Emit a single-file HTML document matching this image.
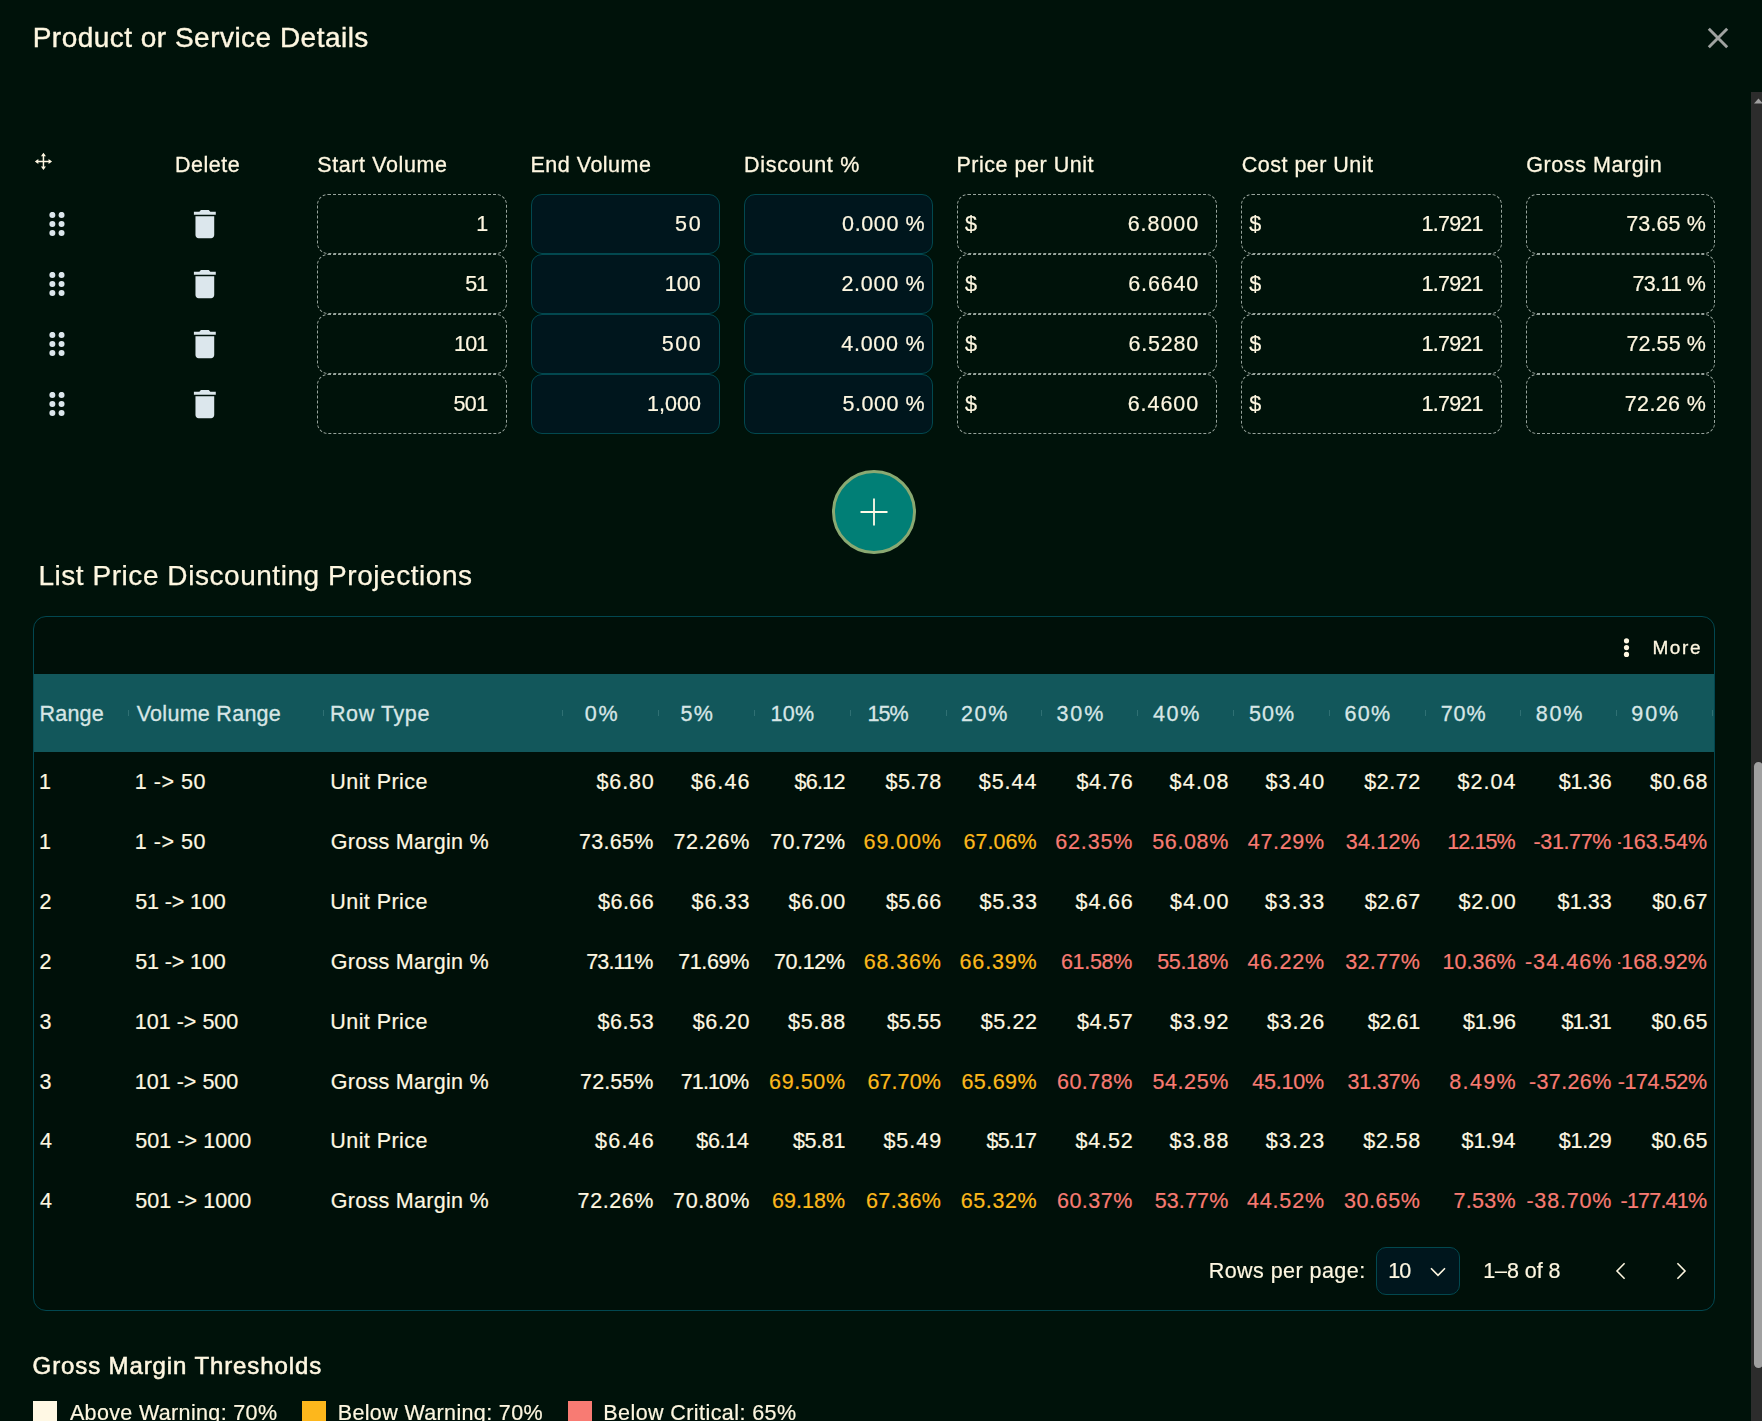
<!DOCTYPE html>
<html lang="en"><head><meta charset="utf-8"><title>Product or Service Details</title>
<style>
*{box-sizing:border-box;margin:0;padding:0}
html,body{width:1762px;height:1421px;overflow:hidden;background:#00120a}
body{position:relative;font-family:"Liberation Sans",Arial,sans-serif;color:#fef7e1;font-size:21.5px}
#root{position:absolute;left:0;top:0;width:1762px;height:1421px;overflow:hidden;will-change:transform}
.a{position:absolute;white-space:nowrap;line-height:30px}

.box{position:absolute;height:60px;border-radius:11px}
.ro{border:1px dashed #97a39c}
.ed{border:1px solid #02484f;background:#00161d}
.tbl{position:absolute;left:33px;top:616px;width:1682px;height:695px;border:1px solid #024750;border-radius:13px;background:#001009}
.thead{position:absolute;left:34px;top:674px;width:1680px;height:78px;background:#12575b}
.sep{position:absolute;top:710px;width:1px;height:6px;background:#2f7073}
</style></head>
<body>
<div class="tbl"></div><div class="thead"></div>
<div class="sep" style="left:128.0px"></div>
<div class="sep" style="left:322.5px"></div>
<div class="sep" style="left:562.4px"></div>
<div class="sep" style="left:658.2px"></div>
<div class="sep" style="left:754.0px"></div>
<div class="sep" style="left:849.8px"></div>
<div class="sep" style="left:945.6px"></div>
<div class="sep" style="left:1041.4px"></div>
<div class="sep" style="left:1137.2px"></div>
<div class="sep" style="left:1233.0px"></div>
<div class="sep" style="left:1328.8px"></div>
<div class="sep" style="left:1424.6px"></div>
<div class="sep" style="left:1520.4px"></div>
<div class="sep" style="left:1616.2px"></div>
<div class="sep" style="left:1712.0px"></div>
<div class="a" style="left:39.4px;top:699.0px;letter-spacing:0.26px;color:#d7e6e6;-webkit-text-stroke:0.3px #d7e6e6;">Range</div>
<div class="a" style="left:136.7px;top:699.0px;letter-spacing:0.28px;color:#d7e6e6;-webkit-text-stroke:0.3px #d7e6e6;">Volume Range</div>
<div class="a" style="left:330.0px;top:699.0px;letter-spacing:0.59px;color:#d7e6e6;-webkit-text-stroke:0.3px #d7e6e6;">Row Type</div>
<div class="a" style="left:584.7px;top:699.0px;letter-spacing:1.83px;color:#d7e6e6;-webkit-text-stroke:0.3px #d7e6e6;">0%</div>
<div class="a" style="left:680.4px;top:699.0px;letter-spacing:1.44px;color:#d7e6e6;-webkit-text-stroke:0.3px #d7e6e6;">5%</div>
<div class="a" style="left:770.5px;top:699.0px;letter-spacing:0.31px;color:#d7e6e6;-webkit-text-stroke:0.3px #d7e6e6;">10%</div>
<div class="a" style="left:867.5px;top:699.0px;letter-spacing:-0.90px;color:#d7e6e6;-webkit-text-stroke:0.3px #d7e6e6;">15%</div>
<div class="a" style="left:960.9px;top:699.0px;letter-spacing:1.67px;color:#d7e6e6;-webkit-text-stroke:0.3px #d7e6e6;">20%</div>
<div class="a" style="left:1056.4px;top:699.0px;letter-spacing:1.95px;color:#d7e6e6;-webkit-text-stroke:0.3px #d7e6e6;">30%</div>
<div class="a" style="left:1152.9px;top:699.0px;letter-spacing:1.72px;color:#d7e6e6;-webkit-text-stroke:0.3px #d7e6e6;">40%</div>
<div class="a" style="left:1248.9px;top:699.0px;letter-spacing:1.10px;color:#d7e6e6;-webkit-text-stroke:0.3px #d7e6e6;">50%</div>
<div class="a" style="left:1344.4px;top:699.0px;letter-spacing:1.36px;color:#d7e6e6;-webkit-text-stroke:0.3px #d7e6e6;">60%</div>
<div class="a" style="left:1440.7px;top:699.0px;letter-spacing:0.90px;color:#d7e6e6;-webkit-text-stroke:0.3px #d7e6e6;">70%</div>
<div class="a" style="left:1535.7px;top:699.0px;letter-spacing:1.80px;color:#d7e6e6;-webkit-text-stroke:0.3px #d7e6e6;">80%</div>
<div class="a" style="left:1631.3px;top:699.0px;letter-spacing:1.91px;color:#d7e6e6;-webkit-text-stroke:0.3px #d7e6e6;">90%</div>
<div class="a" style="left:39.0px;top:767.1px;letter-spacing:1.35px;-webkit-text-stroke:0.2px #fef7e1;">1</div>
<div class="a" style="left:134.8px;top:767.1px;letter-spacing:0.51px;-webkit-text-stroke:0.2px #fef7e1;">1 -&gt; 50</div>
<div class="a" style="left:330.3px;top:767.1px;letter-spacing:0.43px;-webkit-text-stroke:0.2px #fef7e1;">Unit Price</div>
<div class="a" style="left:596.6px;top:767.1px;letter-spacing:0.81px;-webkit-text-stroke:0.2px #fef7e1;">$6.80</div>
<div class="a" style="left:690.9px;top:767.1px;letter-spacing:1.21px;-webkit-text-stroke:0.2px #fef7e1;">$6.46</div>
<div class="a" style="left:794.5px;top:767.1px;letter-spacing:-0.72px;-webkit-text-stroke:0.2px #fef7e1;">$6.12</div>
<div class="a" style="left:885.6px;top:767.1px;letter-spacing:0.43px;-webkit-text-stroke:0.2px #fef7e1;">$5.78</div>
<div class="a" style="left:978.7px;top:767.1px;letter-spacing:1.00px;-webkit-text-stroke:0.2px #fef7e1;">$5.44</div>
<div class="a" style="left:1076.5px;top:767.1px;letter-spacing:0.61px;-webkit-text-stroke:0.2px #fef7e1;">$4.76</div>
<div class="a" style="left:1169.6px;top:767.1px;letter-spacing:1.27px;-webkit-text-stroke:0.2px #fef7e1;">$4.08</div>
<div class="a" style="left:1265.4px;top:767.1px;letter-spacing:1.26px;-webkit-text-stroke:0.2px #fef7e1;">$3.40</div>
<div class="a" style="left:1364.3px;top:767.1px;letter-spacing:0.52px;-webkit-text-stroke:0.2px #fef7e1;">$2.72</div>
<div class="a" style="left:1457.6px;top:767.1px;letter-spacing:1.01px;-webkit-text-stroke:0.2px #fef7e1;">$2.04</div>
<div class="a" style="left:1558.8px;top:767.1px;letter-spacing:-0.21px;-webkit-text-stroke:0.2px #fef7e1;">$1.36</div>
<div class="a" style="left:1650.1px;top:767.1px;letter-spacing:0.90px;-webkit-text-stroke:0.2px #fef7e1;">$0.68</div>
<div class="a" style="left:39.0px;top:827.0px;letter-spacing:1.35px;-webkit-text-stroke:0.2px #fef7e1;">1</div>
<div class="a" style="left:134.8px;top:827.0px;letter-spacing:0.51px;-webkit-text-stroke:0.2px #fef7e1;">1 -&gt; 50</div>
<div class="a" style="left:330.7px;top:827.0px;letter-spacing:0.29px;-webkit-text-stroke:0.2px #fef7e1;">Gross Margin %</div>
<div class="a" style="left:579.0px;top:827.0px;letter-spacing:0.31px;-webkit-text-stroke:0.2px #fef7e1;">73.65%</div>
<div class="a" style="left:673.4px;top:827.0px;letter-spacing:0.59px;-webkit-text-stroke:0.2px #fef7e1;">72.26%</div>
<div class="a" style="left:770.2px;top:827.0px;letter-spacing:0.39px;-webkit-text-stroke:0.2px #fef7e1;">70.72%</div>
<div class="a" style="left:863.6px;top:827.0px;letter-spacing:0.87px;color:#fcb81c;-webkit-text-stroke:0.2px #fcb81c;">69.00%</div>
<div class="a" style="left:963.5px;top:827.0px;letter-spacing:0.05px;color:#fcb81c;-webkit-text-stroke:0.2px #fcb81c;">67.06%</div>
<div class="a" style="left:1055.2px;top:827.0px;letter-spacing:0.87px;color:#f87b73;-webkit-text-stroke:0.2px #f87b73;">62.35%</div>
<div class="a" style="left:1152.3px;top:827.0px;letter-spacing:0.61px;color:#f87b73;-webkit-text-stroke:0.2px #f87b73;">56.08%</div>
<div class="a" style="left:1247.8px;top:827.0px;letter-spacing:0.66px;color:#f87b73;-webkit-text-stroke:0.2px #f87b73;">47.29%</div>
<div class="a" style="left:1345.7px;top:827.0px;letter-spacing:0.24px;color:#f87b73;-webkit-text-stroke:0.2px #f87b73;">34.12%</div>
<div class="a" style="left:1447.2px;top:827.0px;letter-spacing:-0.90px;color:#f87b73;-webkit-text-stroke:0.2px #f87b73;">12.15%</div>
<div class="a" style="left:1533.6px;top:827.0px;letter-spacing:-0.39px;color:#f87b73;-webkit-text-stroke:0.2px #f87b73;">-31.77%</div>
<div class="a" style="left:1614.4px;top:827.0px;letter-spacing:0.09px;color:#f87b73;-webkit-text-stroke:0.2px #f87b73;clip-path:inset(0 0 0 3.8px);">-163.54%</div>
<div class="a" style="left:39.4px;top:886.8px;letter-spacing:1.35px;-webkit-text-stroke:0.2px #fef7e1;">2</div>
<div class="a" style="left:135.2px;top:886.8px;letter-spacing:-0.12px;-webkit-text-stroke:0.2px #fef7e1;">51 -&gt; 100</div>
<div class="a" style="left:330.3px;top:886.8px;letter-spacing:0.43px;-webkit-text-stroke:0.2px #fef7e1;">Unit Price</div>
<div class="a" style="left:598.1px;top:886.8px;letter-spacing:0.45px;-webkit-text-stroke:0.2px #fef7e1;">$6.66</div>
<div class="a" style="left:691.5px;top:886.8px;letter-spacing:1.04px;-webkit-text-stroke:0.2px #fef7e1;">$6.33</div>
<div class="a" style="left:788.5px;top:886.8px;letter-spacing:0.74px;-webkit-text-stroke:0.2px #fef7e1;">$6.00</div>
<div class="a" style="left:886.0px;top:886.8px;letter-spacing:0.32px;-webkit-text-stroke:0.2px #fef7e1;">$5.66</div>
<div class="a" style="left:979.4px;top:886.8px;letter-spacing:0.91px;-webkit-text-stroke:0.2px #fef7e1;">$5.33</div>
<div class="a" style="left:1075.6px;top:886.8px;letter-spacing:0.83px;-webkit-text-stroke:0.2px #fef7e1;">$4.66</div>
<div class="a" style="left:1170.1px;top:886.8px;letter-spacing:1.11px;-webkit-text-stroke:0.2px #fef7e1;">$4.00</div>
<div class="a" style="left:1265.1px;top:886.8px;letter-spacing:1.34px;-webkit-text-stroke:0.2px #fef7e1;">$3.33</div>
<div class="a" style="left:1364.8px;top:886.8px;letter-spacing:0.38px;-webkit-text-stroke:0.2px #fef7e1;">$2.67</div>
<div class="a" style="left:1458.5px;top:886.8px;letter-spacing:0.88px;-webkit-text-stroke:0.2px #fef7e1;">$2.00</div>
<div class="a" style="left:1557.6px;top:886.8px;letter-spacing:0.08px;-webkit-text-stroke:0.2px #fef7e1;">$1.33</div>
<div class="a" style="left:1652.2px;top:886.8px;letter-spacing:0.39px;-webkit-text-stroke:0.2px #fef7e1;">$0.67</div>
<div class="a" style="left:39.4px;top:946.7px;letter-spacing:1.35px;-webkit-text-stroke:0.2px #fef7e1;">2</div>
<div class="a" style="left:135.2px;top:946.7px;letter-spacing:-0.12px;-webkit-text-stroke:0.2px #fef7e1;">51 -&gt; 100</div>
<div class="a" style="left:330.7px;top:946.7px;letter-spacing:0.29px;-webkit-text-stroke:0.2px #fef7e1;">Gross Margin %</div>
<div class="a" style="left:586.2px;top:946.7px;letter-spacing:-0.83px;-webkit-text-stroke:0.2px #fef7e1;">73.11%</div>
<div class="a" style="left:678.2px;top:946.7px;letter-spacing:-0.37px;-webkit-text-stroke:0.2px #fef7e1;">71.69%</div>
<div class="a" style="left:773.9px;top:946.7px;letter-spacing:-0.36px;-webkit-text-stroke:0.2px #fef7e1;">70.12%</div>
<div class="a" style="left:863.8px;top:946.7px;letter-spacing:0.83px;color:#fcb81c;-webkit-text-stroke:0.2px #fcb81c;">68.36%</div>
<div class="a" style="left:959.6px;top:946.7px;letter-spacing:0.82px;color:#fcb81c;-webkit-text-stroke:0.2px #fcb81c;">66.39%</div>
<div class="a" style="left:1060.9px;top:946.7px;letter-spacing:-0.28px;color:#f87b73;-webkit-text-stroke:0.2px #f87b73;">61.58%</div>
<div class="a" style="left:1157.3px;top:946.7px;letter-spacing:-0.39px;color:#f87b73;-webkit-text-stroke:0.2px #f87b73;">55.18%</div>
<div class="a" style="left:1247.4px;top:946.7px;letter-spacing:0.74px;color:#f87b73;-webkit-text-stroke:0.2px #f87b73;">46.22%</div>
<div class="a" style="left:1345.2px;top:946.7px;letter-spacing:0.34px;color:#f87b73;-webkit-text-stroke:0.2px #f87b73;">32.77%</div>
<div class="a" style="left:1442.6px;top:946.7px;letter-spacing:0.02px;color:#f87b73;-webkit-text-stroke:0.2px #f87b73;">10.36%</div>
<div class="a" style="left:1524.9px;top:946.7px;letter-spacing:1.06px;color:#f87b73;-webkit-text-stroke:0.2px #f87b73;">-34.46%</div>
<div class="a" style="left:1613.7px;top:946.7px;letter-spacing:0.18px;color:#f87b73;-webkit-text-stroke:0.2px #f87b73;clip-path:inset(0 0 0 4.5px);">-168.92%</div>
<div class="a" style="left:39.4px;top:1006.6px;letter-spacing:1.35px;-webkit-text-stroke:0.2px #fef7e1;">3</div>
<div class="a" style="left:134.8px;top:1006.6px;letter-spacing:0.01px;-webkit-text-stroke:0.2px #fef7e1;">101 -&gt; 500</div>
<div class="a" style="left:330.3px;top:1006.6px;letter-spacing:0.43px;-webkit-text-stroke:0.2px #fef7e1;">Unit Price</div>
<div class="a" style="left:597.4px;top:1006.6px;letter-spacing:0.62px;-webkit-text-stroke:0.2px #fef7e1;">$6.53</div>
<div class="a" style="left:692.7px;top:1006.6px;letter-spacing:0.72px;-webkit-text-stroke:0.2px #fef7e1;">$6.20</div>
<div class="a" style="left:787.9px;top:1006.6px;letter-spacing:0.90px;-webkit-text-stroke:0.2px #fef7e1;">$5.88</div>
<div class="a" style="left:887.1px;top:1006.6px;letter-spacing:0.05px;-webkit-text-stroke:0.2px #fef7e1;">$5.55</div>
<div class="a" style="left:980.7px;top:1006.6px;letter-spacing:0.62px;-webkit-text-stroke:0.2px #fef7e1;">$5.22</div>
<div class="a" style="left:1077.0px;top:1006.6px;letter-spacing:0.49px;-webkit-text-stroke:0.2px #fef7e1;">$4.57</div>
<div class="a" style="left:1170.0px;top:1006.6px;letter-spacing:1.18px;-webkit-text-stroke:0.2px #fef7e1;">$3.92</div>
<div class="a" style="left:1266.9px;top:1006.6px;letter-spacing:0.89px;-webkit-text-stroke:0.2px #fef7e1;">$3.26</div>
<div class="a" style="left:1367.8px;top:1006.6px;letter-spacing:-0.36px;-webkit-text-stroke:0.2px #fef7e1;">$2.61</div>
<div class="a" style="left:1463.0px;top:1006.6px;letter-spacing:-0.23px;-webkit-text-stroke:0.2px #fef7e1;">$1.96</div>
<div class="a" style="left:1561.5px;top:1006.6px;letter-spacing:-0.90px;-webkit-text-stroke:0.2px #fef7e1;">$1.31</div>
<div class="a" style="left:1651.5px;top:1006.6px;letter-spacing:0.56px;-webkit-text-stroke:0.2px #fef7e1;">$0.65</div>
<div class="a" style="left:39.4px;top:1066.5px;letter-spacing:1.35px;-webkit-text-stroke:0.2px #fef7e1;">3</div>
<div class="a" style="left:134.8px;top:1066.5px;letter-spacing:0.01px;-webkit-text-stroke:0.2px #fef7e1;">101 -&gt; 500</div>
<div class="a" style="left:330.7px;top:1066.5px;letter-spacing:0.29px;-webkit-text-stroke:0.2px #fef7e1;">Gross Margin %</div>
<div class="a" style="left:580.1px;top:1066.5px;letter-spacing:0.08px;-webkit-text-stroke:0.2px #fef7e1;">72.55%</div>
<div class="a" style="left:680.8px;top:1066.5px;letter-spacing:-0.90px;-webkit-text-stroke:0.2px #fef7e1;">71.10%</div>
<div class="a" style="left:769.1px;top:1066.5px;letter-spacing:0.60px;color:#fcb81c;-webkit-text-stroke:0.2px #fcb81c;">69.50%</div>
<div class="a" style="left:867.4px;top:1066.5px;letter-spacing:0.11px;color:#fcb81c;-webkit-text-stroke:0.2px #fcb81c;">67.70%</div>
<div class="a" style="left:961.4px;top:1066.5px;letter-spacing:0.47px;color:#fcb81c;-webkit-text-stroke:0.2px #fcb81c;">65.69%</div>
<div class="a" style="left:1056.9px;top:1066.5px;letter-spacing:0.53px;color:#f87b73;-webkit-text-stroke:0.2px #f87b73;">60.78%</div>
<div class="a" style="left:1152.5px;top:1066.5px;letter-spacing:0.57px;color:#f87b73;-webkit-text-stroke:0.2px #f87b73;">54.25%</div>
<div class="a" style="left:1252.3px;top:1066.5px;letter-spacing:-0.24px;color:#f87b73;-webkit-text-stroke:0.2px #f87b73;">45.10%</div>
<div class="a" style="left:1347.5px;top:1066.5px;letter-spacing:-0.12px;color:#f87b73;-webkit-text-stroke:0.2px #f87b73;">31.37%</div>
<div class="a" style="left:1449.3px;top:1066.5px;letter-spacing:1.35px;color:#f87b73;-webkit-text-stroke:0.2px #f87b73;">8.49%</div>
<div class="a" style="left:1528.9px;top:1066.5px;letter-spacing:0.39px;color:#f87b73;-webkit-text-stroke:0.2px #f87b73;">-37.26%</div>
<div class="a" style="left:1617.7px;top:1066.5px;letter-spacing:-0.38px;color:#f87b73;-webkit-text-stroke:0.2px #f87b73;">-174.52%</div>
<div class="a" style="left:40.1px;top:1126.3px;letter-spacing:1.35px;-webkit-text-stroke:0.2px #fef7e1;">4</div>
<div class="a" style="left:135.2px;top:1126.3px;letter-spacing:0.06px;-webkit-text-stroke:0.2px #fef7e1;">501 -&gt; 1000</div>
<div class="a" style="left:330.3px;top:1126.3px;letter-spacing:0.43px;-webkit-text-stroke:0.2px #fef7e1;">Unit Price</div>
<div class="a" style="left:595.1px;top:1126.3px;letter-spacing:1.21px;-webkit-text-stroke:0.2px #fef7e1;">$6.46</div>
<div class="a" style="left:696.2px;top:1126.3px;letter-spacing:-0.24px;-webkit-text-stroke:0.2px #fef7e1;">$6.14</div>
<div class="a" style="left:792.9px;top:1126.3px;letter-spacing:-0.34px;-webkit-text-stroke:0.2px #fef7e1;">$5.81</div>
<div class="a" style="left:883.4px;top:1126.3px;letter-spacing:0.99px;-webkit-text-stroke:0.2px #fef7e1;">$5.49</div>
<div class="a" style="left:986.6px;top:1126.3px;letter-spacing:-0.86px;-webkit-text-stroke:0.2px #fef7e1;">$5.17</div>
<div class="a" style="left:1075.5px;top:1126.3px;letter-spacing:0.86px;-webkit-text-stroke:0.2px #fef7e1;">$4.52</div>
<div class="a" style="left:1169.4px;top:1126.3px;letter-spacing:1.33px;-webkit-text-stroke:0.2px #fef7e1;">$3.88</div>
<div class="a" style="left:1265.8px;top:1126.3px;letter-spacing:1.18px;-webkit-text-stroke:0.2px #fef7e1;">$3.23</div>
<div class="a" style="left:1363.3px;top:1126.3px;letter-spacing:0.75px;-webkit-text-stroke:0.2px #fef7e1;">$2.58</div>
<div class="a" style="left:1461.5px;top:1126.3px;letter-spacing:0.03px;-webkit-text-stroke:0.2px #fef7e1;">$1.94</div>
<div class="a" style="left:1558.8px;top:1126.3px;letter-spacing:-0.20px;-webkit-text-stroke:0.2px #fef7e1;">$1.29</div>
<div class="a" style="left:1651.5px;top:1126.3px;letter-spacing:0.56px;-webkit-text-stroke:0.2px #fef7e1;">$0.65</div>
<div class="a" style="left:40.1px;top:1186.2px;letter-spacing:1.35px;-webkit-text-stroke:0.2px #fef7e1;">4</div>
<div class="a" style="left:135.2px;top:1186.2px;letter-spacing:0.06px;-webkit-text-stroke:0.2px #fef7e1;">501 -&gt; 1000</div>
<div class="a" style="left:330.7px;top:1186.2px;letter-spacing:0.29px;-webkit-text-stroke:0.2px #fef7e1;">Gross Margin %</div>
<div class="a" style="left:577.6px;top:1186.2px;letter-spacing:0.59px;-webkit-text-stroke:0.2px #fef7e1;">72.26%</div>
<div class="a" style="left:673.1px;top:1186.2px;letter-spacing:0.65px;-webkit-text-stroke:0.2px #fef7e1;">70.80%</div>
<div class="a" style="left:771.9px;top:1186.2px;letter-spacing:0.04px;color:#fcb81c;-webkit-text-stroke:0.2px #fcb81c;">69.18%</div>
<div class="a" style="left:865.9px;top:1186.2px;letter-spacing:0.41px;color:#fcb81c;-webkit-text-stroke:0.2px #fcb81c;">67.36%</div>
<div class="a" style="left:960.7px;top:1186.2px;letter-spacing:0.60px;color:#fcb81c;-webkit-text-stroke:0.2px #fcb81c;">65.32%</div>
<div class="a" style="left:1056.9px;top:1186.2px;letter-spacing:0.53px;color:#f87b73;-webkit-text-stroke:0.2px #f87b73;">60.37%</div>
<div class="a" style="left:1154.7px;top:1186.2px;letter-spacing:0.13px;color:#f87b73;-webkit-text-stroke:0.2px #f87b73;">53.77%</div>
<div class="a" style="left:1247.0px;top:1186.2px;letter-spacing:0.82px;color:#f87b73;-webkit-text-stroke:0.2px #f87b73;">44.52%</div>
<div class="a" style="left:1343.9px;top:1186.2px;letter-spacing:0.61px;color:#f87b73;-webkit-text-stroke:0.2px #f87b73;">30.65%</div>
<div class="a" style="left:1453.4px;top:1186.2px;letter-spacing:0.34px;color:#f87b73;-webkit-text-stroke:0.2px #f87b73;">7.53%</div>
<div class="a" style="left:1526.4px;top:1186.2px;letter-spacing:0.81px;color:#f87b73;-webkit-text-stroke:0.2px #f87b73;">-38.70%</div>
<div class="a" style="left:1620.5px;top:1186.2px;letter-spacing:-0.78px;color:#f87b73;-webkit-text-stroke:0.2px #f87b73;">-177.41%</div>
<div id="root">
<svg class="a" style="left:1706px;top:26px" width="24" height="24" viewBox="0 0 24 24"><path d="M2.8 2.8 L21.2 21.2 M21.2 2.8 L2.8 21.2" stroke="#a0a3a1" stroke-width="2.9" fill="none"/></svg>
<div class="a" style="left:1751px;top:92px;width:11px;height:1329px;background:#2c2c2c"></div>
<svg class="a" style="left:1754px;top:97px" width="9" height="7" viewBox="0 0 9 7"><path d="M0 6.5 L4.5 1.5 L9 6.5 Z" fill="#a0a0a0"/></svg>
<div class="a" style="left:1754px;top:761.5px;width:9px;height:606px;background:#a0a0a0;border-radius:4.5px"></div>
<svg class="a" style="left:34px;top:152px" width="19" height="19" viewBox="-0.45 -0.45 19 19"><path d="M9 2V16M2 9H16" stroke="#fef7e1" stroke-width="1.5" fill="none"/><path d="M9 0.4L11.5 3.9H6.5ZM9 17.6L11.5 14.1H6.5ZM0.4 9L3.9 6.5V11.5ZM17.6 9L14.1 6.5V11.5Z" fill="#fef7e1"/></svg>
<svg class="a" style="left:49px;top:212px" width="16" height="24" viewBox="-0.35 0.1 16 24" fill="#dce7ed"><circle cx="3" cy="3" r="3"/><circle cx="12.2" cy="3" r="3"/><circle cx="3" cy="12" r="3"/><circle cx="12.2" cy="12" r="3"/><circle cx="3" cy="21" r="3"/><circle cx="12.2" cy="21" r="3"/></svg>
<svg class="a" style="left:186px;top:205px" width="37.5" height="37.5" viewBox="-0.06 -0.26 24 24" fill="#dce7ed"><path d="M6 19c0 1.1.9 2 2 2h8c1.1 0 2-.9 2-2V7H6v12zM19 4h-3.5l-1-1h-5l-1 1H5v2h14V4z"/></svg>
<div class="box ro" style="left:317px;top:194px;width:190px"></div>
<div class="box ed" style="left:531px;top:194px;width:189px"></div>
<div class="box ed" style="left:744px;top:194px;width:189px"></div>
<div class="box ro" style="left:957px;top:194px;width:260px"></div>
<div class="box ro" style="left:1241px;top:194px;width:261px"></div>
<div class="box ro" style="left:1526px;top:194px;width:189px"></div>
<svg class="a" style="left:49px;top:272px" width="16" height="24" viewBox="-0.35 0.1 16 24" fill="#dce7ed"><circle cx="3" cy="3" r="3"/><circle cx="12.2" cy="3" r="3"/><circle cx="3" cy="12" r="3"/><circle cx="12.2" cy="12" r="3"/><circle cx="3" cy="21" r="3"/><circle cx="12.2" cy="21" r="3"/></svg>
<svg class="a" style="left:186px;top:265px" width="37.5" height="37.5" viewBox="-0.06 -0.26 24 24" fill="#dce7ed"><path d="M6 19c0 1.1.9 2 2 2h8c1.1 0 2-.9 2-2V7H6v12zM19 4h-3.5l-1-1h-5l-1 1H5v2h14V4z"/></svg>
<div class="box ro" style="left:317px;top:254px;width:190px"></div>
<div class="box ed" style="left:531px;top:254px;width:189px"></div>
<div class="box ed" style="left:744px;top:254px;width:189px"></div>
<div class="box ro" style="left:957px;top:254px;width:260px"></div>
<div class="box ro" style="left:1241px;top:254px;width:261px"></div>
<div class="box ro" style="left:1526px;top:254px;width:189px"></div>
<svg class="a" style="left:49px;top:332px" width="16" height="24" viewBox="-0.35 0.1 16 24" fill="#dce7ed"><circle cx="3" cy="3" r="3"/><circle cx="12.2" cy="3" r="3"/><circle cx="3" cy="12" r="3"/><circle cx="12.2" cy="12" r="3"/><circle cx="3" cy="21" r="3"/><circle cx="12.2" cy="21" r="3"/></svg>
<svg class="a" style="left:186px;top:325px" width="37.5" height="37.5" viewBox="-0.06 -0.26 24 24" fill="#dce7ed"><path d="M6 19c0 1.1.9 2 2 2h8c1.1 0 2-.9 2-2V7H6v12zM19 4h-3.5l-1-1h-5l-1 1H5v2h14V4z"/></svg>
<div class="box ro" style="left:317px;top:314px;width:190px"></div>
<div class="box ed" style="left:531px;top:314px;width:189px"></div>
<div class="box ed" style="left:744px;top:314px;width:189px"></div>
<div class="box ro" style="left:957px;top:314px;width:260px"></div>
<div class="box ro" style="left:1241px;top:314px;width:261px"></div>
<div class="box ro" style="left:1526px;top:314px;width:189px"></div>
<svg class="a" style="left:49px;top:392px" width="16" height="24" viewBox="-0.35 0.1 16 24" fill="#dce7ed"><circle cx="3" cy="3" r="3"/><circle cx="12.2" cy="3" r="3"/><circle cx="3" cy="12" r="3"/><circle cx="12.2" cy="12" r="3"/><circle cx="3" cy="21" r="3"/><circle cx="12.2" cy="21" r="3"/></svg>
<svg class="a" style="left:186px;top:385px" width="37.5" height="37.5" viewBox="-0.06 -0.26 24 24" fill="#dce7ed"><path d="M6 19c0 1.1.9 2 2 2h8c1.1 0 2-.9 2-2V7H6v12zM19 4h-3.5l-1-1h-5l-1 1H5v2h14V4z"/></svg>
<div class="box ro" style="left:317px;top:374px;width:190px"></div>
<div class="box ed" style="left:531px;top:374px;width:189px"></div>
<div class="box ed" style="left:744px;top:374px;width:189px"></div>
<div class="box ro" style="left:957px;top:374px;width:260px"></div>
<div class="box ro" style="left:1241px;top:374px;width:261px"></div>
<div class="box ro" style="left:1526px;top:374px;width:189px"></div>
<div class="a" style="left:832px;top:470px;width:84px;height:84px;border-radius:50%;background:#017f76;border:3.5px solid #8aa972"></div>
<svg class="a" style="left:859px;top:497px" width="30" height="30" viewBox="0 0 30 30"><path d="M15 1.5V28.5M1.5 15H28.5" stroke="#fffbe8" stroke-width="1.8" fill="none"/></svg>
<svg class="a" style="left:1623px;top:637px" width="7" height="21" viewBox="0 0 7 21" fill="#fef7e1"><circle cx="3.5" cy="3.8" r="2.6"/><circle cx="3.5" cy="10.6" r="2.6"/><circle cx="3.5" cy="17.4" r="2.6"/></svg>
<div class="a" style="left:1376px;top:1247px;width:84px;height:48px;border:1px solid #02484f;background:#00161d;border-radius:10px"></div>
<svg class="a" style="left:1429px;top:1266px" width="18" height="12" viewBox="0 0 18 12"><path d="M2 2.3 L9 9.3 L16 2.3" stroke="#fef7e1" stroke-width="1.6" fill="none"/></svg>
<svg class="a" style="left:1614px;top:1261px" width="13" height="20" viewBox="0 0 13 20"><path d="M10.6 2.2 L3 10 L10.6 17.8" stroke="#fef7e1" stroke-width="1.6" fill="none"/></svg>
<svg class="a" style="left:1675px;top:1261px" width="13" height="20" viewBox="0 0 13 20"><path d="M2.4 2.2 L10 10 L2.4 17.8" stroke="#fef7e1" stroke-width="1.6" fill="none"/></svg>
<div class="a" style="left:33px;top:1401px;width:24px;height:24px;background:#fff8e4"></div>
<div class="a" style="left:302px;top:1401px;width:24px;height:24px;background:#fdb71c"></div>
<div class="a" style="left:568px;top:1401px;width:24px;height:24px;background:#f87b73"></div>
<div class="a" style="left:32.7px;top:22.7px;font-size:28px;letter-spacing:0.48px;-webkit-text-stroke:0.4px #fef7e1;">Product or Service Details</div>
<div class="a" style="left:175.0px;top:150.0px;letter-spacing:0.51px;-webkit-text-stroke:0.3px #fef7e1;">Delete</div>
<div class="a" style="left:317.2px;top:150.0px;letter-spacing:0.61px;-webkit-text-stroke:0.3px #fef7e1;">Start Volume</div>
<div class="a" style="left:530.5px;top:150.0px;letter-spacing:0.50px;-webkit-text-stroke:0.3px #fef7e1;">End Volume</div>
<div class="a" style="left:744.1px;top:150.0px;letter-spacing:0.72px;-webkit-text-stroke:0.3px #fef7e1;">Discount %</div>
<div class="a" style="left:956.4px;top:150.0px;letter-spacing:0.53px;-webkit-text-stroke:0.3px #fef7e1;">Price per Unit</div>
<div class="a" style="left:1241.8px;top:150.0px;letter-spacing:0.48px;-webkit-text-stroke:0.3px #fef7e1;">Cost per Unit</div>
<div class="a" style="left:1526.3px;top:150.0px;letter-spacing:0.57px;-webkit-text-stroke:0.3px #fef7e1;">Gross Margin</div>
<div class="a" style="left:476.3px;top:209.0px;letter-spacing:1.00px;-webkit-text-stroke:0.2px #fef7e1;">1</div>
<div class="a" style="left:675.0px;top:209.0px;letter-spacing:1.84px;-webkit-text-stroke:0.2px #fef7e1;">50</div>
<div class="a" style="left:842.1px;top:209.0px;letter-spacing:0.62px;-webkit-text-stroke:0.2px #fef7e1;">0.000 %</div>
<div class="a" style="left:1127.7px;top:209.0px;letter-spacing:0.94px;-webkit-text-stroke:0.2px #fef7e1;">6.8000</div>
<div class="a" style="left:1421.6px;top:209.0px;letter-spacing:-0.78px;-webkit-text-stroke:0.2px #fef7e1;">1.7921</div>
<div class="a" style="left:1626.3px;top:209.0px;letter-spacing:0.12px;-webkit-text-stroke:0.2px #fef7e1;">73.65 %</div>
<div class="a" style="left:964.9px;top:209.0px;letter-spacing:0.85px;-webkit-text-stroke:0.2px #fef7e1;">$</div>
<div class="a" style="left:1249.2px;top:209.0px;letter-spacing:0.85px;-webkit-text-stroke:0.2px #fef7e1;">$</div>
<div class="a" style="left:465.2px;top:269.0px;letter-spacing:-0.90px;-webkit-text-stroke:0.2px #fef7e1;">51</div>
<div class="a" style="left:664.8px;top:269.0px;letter-spacing:0.02px;-webkit-text-stroke:0.2px #fef7e1;">100</div>
<div class="a" style="left:841.4px;top:269.0px;letter-spacing:0.73px;-webkit-text-stroke:0.2px #fef7e1;">2.000 %</div>
<div class="a" style="left:1128.3px;top:269.0px;letter-spacing:0.83px;-webkit-text-stroke:0.2px #fef7e1;">6.6640</div>
<div class="a" style="left:1421.6px;top:269.0px;letter-spacing:-0.78px;-webkit-text-stroke:0.2px #fef7e1;">1.7921</div>
<div class="a" style="left:1632.5px;top:269.0px;letter-spacing:-0.66px;-webkit-text-stroke:0.2px #fef7e1;">73.11 %</div>
<div class="a" style="left:964.9px;top:269.0px;letter-spacing:0.85px;-webkit-text-stroke:0.2px #fef7e1;">$</div>
<div class="a" style="left:1249.2px;top:269.0px;letter-spacing:0.85px;-webkit-text-stroke:0.2px #fef7e1;">$</div>
<div class="a" style="left:454.1px;top:329.0px;letter-spacing:-0.90px;-webkit-text-stroke:0.2px #fef7e1;">101</div>
<div class="a" style="left:661.8px;top:329.0px;letter-spacing:1.51px;-webkit-text-stroke:0.2px #fef7e1;">500</div>
<div class="a" style="left:841.2px;top:329.0px;letter-spacing:0.76px;-webkit-text-stroke:0.2px #fef7e1;">4.000 %</div>
<div class="a" style="left:1128.6px;top:329.0px;letter-spacing:0.76px;-webkit-text-stroke:0.2px #fef7e1;">6.5280</div>
<div class="a" style="left:1421.6px;top:329.0px;letter-spacing:-0.78px;-webkit-text-stroke:0.2px #fef7e1;">1.7921</div>
<div class="a" style="left:1626.4px;top:329.0px;letter-spacing:0.10px;-webkit-text-stroke:0.2px #fef7e1;">72.55 %</div>
<div class="a" style="left:964.9px;top:329.0px;letter-spacing:0.85px;-webkit-text-stroke:0.2px #fef7e1;">$</div>
<div class="a" style="left:1249.2px;top:329.0px;letter-spacing:0.85px;-webkit-text-stroke:0.2px #fef7e1;">$</div>
<div class="a" style="left:453.4px;top:389.0px;letter-spacing:-0.53px;-webkit-text-stroke:0.2px #fef7e1;">501</div>
<div class="a" style="left:647.0px;top:389.0px;letter-spacing:0.05px;-webkit-text-stroke:0.2px #fef7e1;">1,000</div>
<div class="a" style="left:842.5px;top:389.0px;letter-spacing:0.55px;-webkit-text-stroke:0.2px #fef7e1;">5.000 %</div>
<div class="a" style="left:1127.7px;top:389.0px;letter-spacing:0.95px;-webkit-text-stroke:0.2px #fef7e1;">6.4600</div>
<div class="a" style="left:1421.6px;top:389.0px;letter-spacing:-0.78px;-webkit-text-stroke:0.2px #fef7e1;">1.7921</div>
<div class="a" style="left:1624.8px;top:389.0px;letter-spacing:0.37px;-webkit-text-stroke:0.2px #fef7e1;">72.26 %</div>
<div class="a" style="left:964.9px;top:389.0px;letter-spacing:0.85px;-webkit-text-stroke:0.2px #fef7e1;">$</div>
<div class="a" style="left:1249.2px;top:389.0px;letter-spacing:0.85px;-webkit-text-stroke:0.2px #fef7e1;">$</div>
<div class="a" style="left:38.4px;top:560.7px;font-size:28px;letter-spacing:0.55px;-webkit-text-stroke:0.25px #fef7e1;">List Price Discounting Projections</div>
<div class="a" style="left:1652.4px;top:633.4px;font-size:19px;letter-spacing:1.62px;-webkit-text-stroke:0.3px #fef7e1;">More</div>
<div class="a" style="left:1208.7px;top:1255.7px;letter-spacing:0.45px;-webkit-text-stroke:0.2px #fef7e1;">Rows per page:</div>
<div class="a" style="left:1388.2px;top:1255.7px;letter-spacing:-0.90px;-webkit-text-stroke:0.2px #fef7e1;">10</div>
<div class="a" style="left:1483.2px;top:1255.7px;letter-spacing:-0.06px;-webkit-text-stroke:0.2px #fef7e1;">1–8 of 8</div>
<div class="a" style="left:32.6px;top:1351.0px;font-size:24px;letter-spacing:0.89px;-webkit-text-stroke:0.55px #fef7e1;">Gross Margin Thresholds</div>
<div class="a" style="left:69.9px;top:1397.5px;letter-spacing:0.35px;-webkit-text-stroke:0.2px #fef7e1;">Above Warning: 70%</div>
<div class="a" style="left:337.7px;top:1397.5px;letter-spacing:0.36px;-webkit-text-stroke:0.2px #fef7e1;">Below Warning: 70%</div>
<div class="a" style="left:603.3px;top:1397.5px;letter-spacing:0.42px;-webkit-text-stroke:0.2px #fef7e1;">Below Critical: 65%</div>
</div></body></html>
